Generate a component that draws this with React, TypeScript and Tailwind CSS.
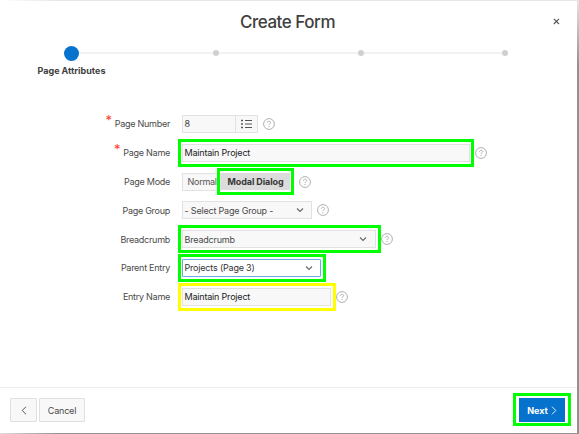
import type { ReactNode } from "react";

function Help({ className = "" }: { className?: string }) {
  return (
    <svg className={`shrink-0 ${className}`} width="12" height="12" viewBox="0 0 12 12" fill="none" stroke="#b0b0b0">
      <circle cx="6" cy="6" r="5.4" strokeWidth="1" />
      <path d="M4.4 4.8C4.4 3.8 5.1 3.3 6 3.3s1.6.5 1.6 1.4C7.6 5.8 6 5.8 6 7" strokeWidth="1" />
      <path d="M6 7.9v1" strokeWidth="1.1" />
    </svg>
  );
}

function Chevron({ className = "" }: { className?: string }) {
  return (
    <svg className={className} width="8" height="6" viewBox="0 0 8 6" fill="none" stroke="#666" strokeWidth="1.1">
      <path d="M1 1.5 4 4.4 7 1.5" />
    </svg>
  );
}

function Highlight({ className }: { className: string }) {
  return <span className={`pointer-events-none absolute border-[3px] ${className}`} />;
}

function Row({ label, required, children }: { label: string; required?: boolean; children: ReactNode }) {
  return (
    <div className="flex h-[28.8px] items-center">
      <label className="flex w-[170px] shrink-0 justify-end text-[9px] tracking-[-0.27px] text-[#4a4a4a]">
        {required && <span className="relative -top-[4px] mr-[3px] text-[13px] leading-[10px] text-[#ff3b30]">*</span>}
        {label}
      </label>
      <div className="ml-3 flex items-center">{children}</div>
    </div>
  );
}

const field =
  "relative flex h-[18px] items-center border border-[#e2e2e2] bg-[#f8f8f8] pl-[1.5px] text-[9px] tracking-[-0.19px]";

export default function App() {
  return (
    <div className="relative flex h-[434px] w-[579px] flex-col overflow-hidden bg-white font-['Inter','Liberation_Sans',sans-serif] leading-none">
      <div className="absolute inset-x-0 top-0 h-px bg-gradient-to-r from-white via-[#e6e6e6] via-10% to-[#e6e6e6]" />
      <div className="absolute right-0 top-0 h-full w-[2px] bg-gradient-to-b from-[#e6e6e6] via-[#929292] via-15% to-[#929292]" />
      <div className="absolute inset-x-0 bottom-0 h-px bg-gradient-to-r from-[#dddddd] via-[#929292] via-10% to-[#929292]" />

      <header className="flex h-[44px] items-center justify-center pr-[4px]">
        <h1 className="text-[17px] font-medium tracking-[-0.47px] text-[#404040]">Create Form</h1>
        <svg className="absolute left-[553px] top-[18px]" width="7" height="7" viewBox="0 0 7 7" stroke="#555" strokeWidth="1.1">
          <path d="M.8.8 6 6M6 .8.8 6" />
        </svg>
      </header>

      <div className="h-[65.6px]">
        <div className="relative ml-[64px] mr-[71px] flex h-[18px] items-center justify-between">
          <div className="absolute left-[8px] right-[3px] top-[8px] h-[2px] bg-[#f2f2f2]" />
          <span className="relative size-[15px] rounded-full bg-[#0572ce]" />
          <span className="relative -left-[3px] size-[6px] rounded-full bg-[#d0d0d0]" />
          <span className="relative -left-[1.5px] size-[6px] rounded-full bg-[#d0d0d0]" />
          <span className="relative size-[6px] rounded-full bg-[#d0d0d0]" />
        </div>
        <div className="ml-[37.5px] mt-[4px] text-[9px] font-bold text-[#404040]">Page Attributes</div>
      </div>

      <main className="flex-1">
        <Row label="Page Number" required>
          <div className={`${field} w-[53px] border-r-0 text-[#404040]`}>8</div>
          <div className="flex h-[18px] w-[23px] items-center justify-center border border-[#e2e2e2] bg-[#f8f8f8]">
            <svg width="11" height="10" viewBox="0 0 11 10" stroke="#555" strokeWidth="1">
              <path d="M0 1.5h2M0 5h2M0 8.5h2" strokeWidth="1.4" />
              <path d="M4 1.5h7M4 5h7M4 8.5h7" />
            </svg>
          </div>
          <Help className="ml-[5px]" />
        </Row>
        <Row label="Page Name" required>
          <div className={`${field} w-[288px] text-[#222]`}>
            Maintain Project
            <Highlight className="-left-[5px] -right-[5px] -top-[6px] h-[28px] border-[#00ff00]" />
          </div>
          <Help className="ml-[5px]" />
        </Row>
        <Row label="Page Mode">
          <div className="flex h-[18px] w-[39px] items-center border border-[#e2e2e2] bg-[#f8f8f8] pl-[4.5px] text-[9px] tracking-[-0.27px] text-[#555]">
            Normal
          </div>
          <div className="relative flex h-[17px] w-[69px] items-center justify-center bg-[#dcdcdc] text-[9px] font-bold tracking-[-0.1px] text-[#383838]">
            Modal Dialog
            <Highlight className="-left-[4px] -right-[4px] -top-[5px] h-[27px] border-[#00ff00]" />
          </div>
          <Help className="ml-[9px]" />
        </Row>
        <Row label="Page Group">
          <div className={`${field} w-[130px] text-[#4a4a4a]`}>
            - Select Page Group -
            <Chevron className="ml-auto mr-[7px]" />
          </div>
          <Help className="ml-[5px]" />
        </Row>
        <Row label="Breadcrumb">
          <div className={`${field} w-[194px] text-[#4a4a4a]`}>
            Breadcrumb
            <Chevron className="ml-auto mr-[8px]" />
            <Highlight className="-left-[5px] -right-[6px] -top-[6px] h-[28px] border-[#00ff00]" />
          </div>
          <Help className="ml-[5px]" />
        </Row>
        <Row label="Parent Entry">
          <div className="relative flex h-[18px] w-[139px] items-center rounded-[1px] border border-[#69aae0] bg-white pl-[1.5px] text-[9px] tracking-[-0.19px] text-[#333]">
            Projects (Page 3)
            <Chevron className="ml-auto mr-[7px]" />
            <Highlight className="-left-[5px] -right-[6px] -top-[6px] h-[28px] border-[#00ff00]" />
          </div>
        </Row>
        <Row label="Entry Name">
          <div className={`${field} w-[149px] text-[#222]`}>
            Maintain Project
            <Highlight className="-left-[5px] -right-[6px] -top-[6px] h-[28px] border-[#ffff00]" />
          </div>
          <Help className="ml-[5px]" />
        </Row>
      </main>

      <footer className="mr-[2px] flex h-[47px] items-start border-t border-[#ececec] pl-[10px] pr-[12px] pt-[10px] text-[9px]">
        <button className="flex h-[24px] w-[27px] items-center justify-center rounded-[1px] border border-[#e0e0e0] bg-[#f8f8f8]">
          <svg width="6" height="9" viewBox="0 0 6 9" fill="none" stroke="#555">
            <path d="M5 .7 1.2 4.5 5 8.3" />
          </svg>
        </button>
        <button className="ml-[2px] flex h-[24px] w-[46px] items-center justify-center rounded-[1px] border border-[#e0e0e0] bg-[#f8f8f8] tracking-[-0.2px] text-[#4a4a4a]">
          Cancel
        </button>
        <button className="relative ml-auto flex h-[24px] w-[46px] items-center justify-center gap-[3px] bg-[#0572ce] font-bold tracking-[-0.1px] text-white">
          Next
          <svg width="6" height="9" viewBox="0 0 6 9" fill="none" stroke="#fff" strokeWidth="0.9">
            <path d="M1 .7 4.8 4.5 1 8.3" />
          </svg>
          <Highlight className="-left-[6px] -right-[6px] -top-[5px] h-[33px] border-[#00ff00]" />
        </button>
      </footer>
    </div>
  );
}
